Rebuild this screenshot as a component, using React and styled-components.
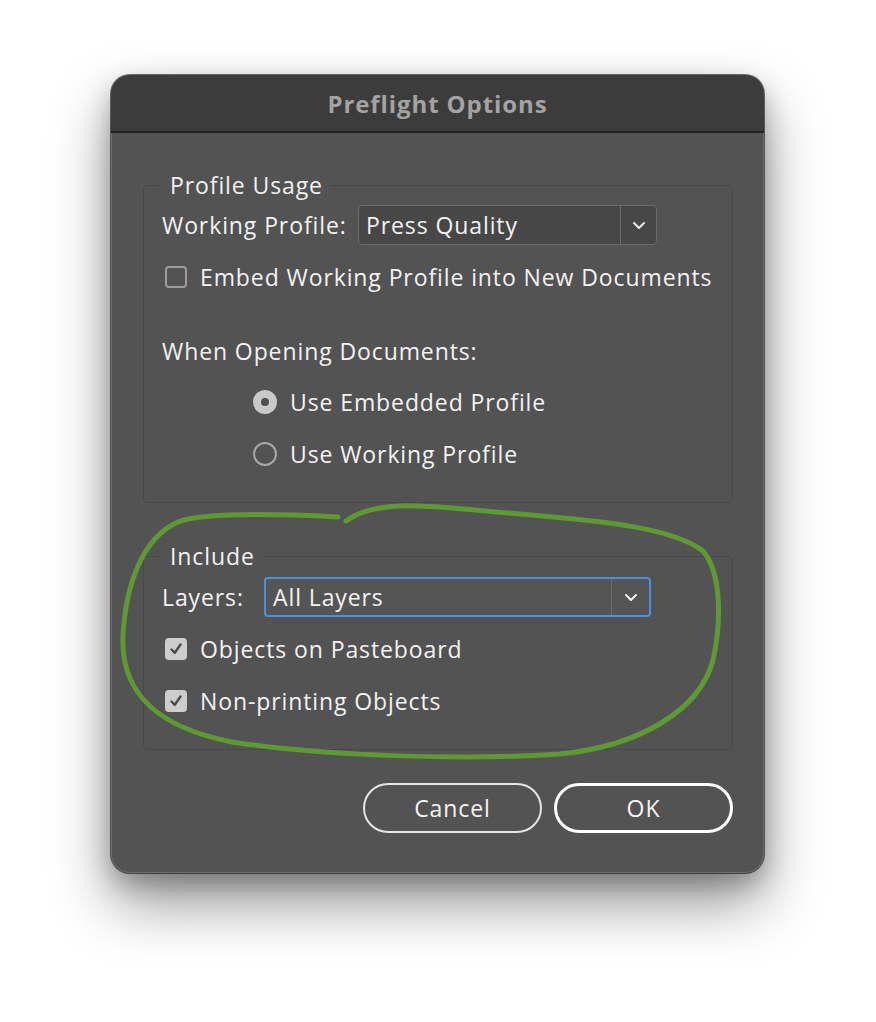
import React, { useState } from "react";
import styled, { createGlobalStyle } from "styled-components";

const GlobalStyle = createGlobalStyle`
  html, body {
    margin: 0;
    padding: 0;
    background: #ffffff;
  }
  body {
    font-family: "Open Sans", "Noto Sans", sans-serif;
  }
`;

const Page = styled.div`
  position: relative;
  width: 876px;
  height: 1022px;
  padding: 75px 0 0 111px;
  box-sizing: border-box;
  background: #ffffff;
`;

const Window = styled.div`
  width: 653px;
  height: 798px;
  box-sizing: border-box;
  background: #535353;
  border-radius: 19px;
  overflow: hidden;
  display: flex;
  flex-direction: column;
  box-shadow: 0 0 0 1px rgba(0, 0, 0, 0.55),
    inset 0 0 0 1px rgba(255, 255, 255, 0.16),
    0 30px 60px rgba(0, 0, 0, 0.42),
    0 10px 25px rgba(0, 0, 0, 0.25);
`;

const TitleBar = styled.div`
  height: 56px;
  flex-shrink: 0;
  display: flex;
  align-items: center;
  justify-content: center;
  background: #3c3c3c;
  border-bottom: 2px solid #222222;
  color: #a3a3a3;
  font-size: 24px;
  font-weight: 700;
  letter-spacing: 0.9px;
`;

const Body = styled.div`
  flex: 1;
  display: flex;
  flex-direction: column;
  padding: 38px 31px 40px 32px;
  color: #f2f2f2;
  font-size: 23px;
  letter-spacing: 0.9px;
`;

const Group = styled.fieldset`
  margin: ${(p) => p.$top || 0}px 0 0;
  padding: ${(p) => p.$gap || 6}px 18px ${(p) => p.$bottom || 34}px 18px;
  border: 1.5px solid #484848;
  border-radius: 5px;
  display: flex;
  flex-direction: column;
  min-width: 0;
`;

const Legend = styled.legend`
  padding: 0 8px;
  margin-left: 0;
  line-height: 28px;
  font-size: 23px;
  color: #f2f2f2;
`;

const Row = styled.div`
  display: flex;
  align-items: center;
  margin-top: ${(p) => p.$top || 0}px;
  padding-left: ${(p) => p.$indent || 0}px;
  height: ${(p) => p.$height || 28}px;
`;

const Label = styled.span`
  display: inline-block;
  width: ${(p) => p.$width}px;
  flex-shrink: 0;
  white-space: nowrap;
`;

const Text = styled.span`
  white-space: nowrap;
  line-height: 28px;
`;

const Select = styled.div`
  width: ${(p) => p.$width}px;
  height: 40px;
  box-sizing: border-box;
  display: flex;
  align-items: stretch;
  background: ${(p) => (p.$focused ? "#555555" : "#474747")};
  border: ${(p) => (p.$focused ? "2px solid #4a90dd" : "1.5px solid #6c6c6c")};
  border-radius: 4px;
`;

const SelectValue = styled.div`
  flex: 1;
  display: flex;
  align-items: center;
  padding-left: 7px;
  white-space: nowrap;
`;

const SelectArrow = styled.div`
  width: ${(p) => p.$width || 35}px;
  display: flex;
  align-items: center;
  justify-content: center;
  border-left: 1.5px solid #6c6c6c;
`;

const Box = styled.span`
  width: 22px;
  height: 22px;
  flex-shrink: 0;
  margin: 0 13px 0 3px;
  border-radius: 4px;
  box-sizing: border-box;
  display: flex;
  align-items: center;
  justify-content: center;
  border: ${(p) => (p.$checked ? "none" : "2px solid #9c9c9c")};
  background: ${(p) => (p.$checked ? "#cdcdcd" : "transparent")};
`;

const Radio = styled.span`
  width: 24px;
  height: 24px;
  flex-shrink: 0;
  margin-right: 13px;
  border-radius: 50%;
  box-sizing: border-box;
  display: flex;
  align-items: center;
  justify-content: center;
  border: ${(p) => (p.$checked ? "none" : "2px solid #a8a8a8")};
  background: ${(p) => (p.$checked ? "#c9c9c9" : "transparent")};

  &::after {
    content: "";
    display: ${(p) => (p.$checked ? "block" : "none")};
    width: 8px;
    height: 8px;
    border-radius: 50%;
    background: #4f4f4f;
  }
`;

const Buttons = styled.div`
  display: flex;
  justify-content: flex-end;
  gap: 12px;
  margin-top: 33px;
`;

const Button = styled.button`
  width: 179px;
  height: 50px;
  box-sizing: border-box;
  border-radius: 25px;
  background: transparent;
  color: #f4f4f4;
  font-family: inherit;
  font-size: 23px;
  letter-spacing: 0.9px;
  border: ${(p) => (p.$primary ? "3.5px solid #ffffff" : "2px solid #e6e6e6")};
  cursor: pointer;
`;

const Scribble = styled.svg`
  position: absolute;
  left: 0;
  top: 0;
  pointer-events: none;
`;

const Chevron = () => (
  <svg width="14" height="9" viewBox="0 0 14 9">
    <path d="M2 2 L7 7 L12 2" fill="none" stroke="#f0f0f0" strokeWidth="2" strokeLinecap="round" strokeLinejoin="round" />
  </svg>
);

const Check = () => (
  <svg width="16" height="16" viewBox="0 0 16 16">
    <path d="M3.5 8.5 L6.8 11.8 L12.5 3.5" fill="none" stroke="#4c4c4c" strokeWidth="2.4" strokeLinecap="round" strokeLinejoin="round" />
  </svg>
);

export default function App() {
  const [embed, setEmbed] = useState(false);
  const [useEmbedded, setUseEmbedded] = useState(true);
  const [pasteboard, setPasteboard] = useState(true);
  const [nonPrinting, setNonPrinting] = useState(true);

  return (
    <Page>
      <GlobalStyle />
      <Window>
        <TitleBar>Preflight Options</TitleBar>
        <Body>
          <Group $gap={6} $bottom={34}>
            <Legend>Profile Usage</Legend>
            <Row $height={40}>
              <Label $width={196}>Working Profile:</Label>
              <Select $width={299}>
                <SelectValue>Press Quality</SelectValue>
                <SelectArrow $width={35}>
                  <Chevron />
                </SelectArrow>
              </Select>
            </Row>
            <Row $top={17} $height={30} onClick={() => setEmbed((v) => !v)}>
              <Box $checked={embed}>{embed && <Check />}</Box>
              <Text>Embed Working Profile into New Documents</Text>
            </Row>
            <Row $top={45}>
              <Text>When Opening Documents:</Text>
            </Row>
            <Row $top={23} $indent={91} onClick={() => setUseEmbedded(true)}>
              <Radio $checked={useEmbedded} />
              <Text>Use Embedded Profile</Text>
            </Row>
            <Row $top={24} $indent={91} onClick={() => setUseEmbedded(false)}>
              <Radio $checked={!useEmbedded} />
              <Text>Use Working Profile</Text>
            </Row>
          </Group>

          <Group $top={39} $gap={7} $bottom={34}>
            <Legend>Include</Legend>
            <Row $height={40}>
              <Label $width={102}>Layers:</Label>
              <Select $width={387} $focused>
                <SelectValue>All Layers</SelectValue>
                <SelectArrow $width={37}>
                  <Chevron />
                </SelectArrow>
              </Select>
            </Row>
            <Row $top={18} onClick={() => setPasteboard((v) => !v)}>
              <Box $checked={pasteboard}>{pasteboard && <Check />}</Box>
              <Text>Objects on Pasteboard</Text>
            </Row>
            <Row $top={24} onClick={() => setNonPrinting((v) => !v)}>
              <Box $checked={nonPrinting}>{nonPrinting && <Check />}</Box>
              <Text>Non-printing Objects</Text>
            </Row>
          </Group>

          <Buttons>
            <Button>Cancel</Button>
            <Button $primary>OK</Button>
          </Buttons>
        </Body>
      </Window>

      <Scribble width="876" height="1022" viewBox="0 0 876 1022">
        <path
          d="M338 517 C 280 514, 205 512, 178 522 C 142 538, 126 585, 123 635 C 120 695, 160 728, 232 742 C 330 757, 470 760, 560 754 C 640 746, 700 710, 713 660 C 722 620, 721 572, 703 551 C 672 527, 600 521, 520 514 C 440 508, 380 496, 346 521"
          fill="none"
          stroke="#5e9a33"
          strokeWidth="5"
          strokeLinecap="round"
        />
      </Scribble>
    </Page>
  );
}
